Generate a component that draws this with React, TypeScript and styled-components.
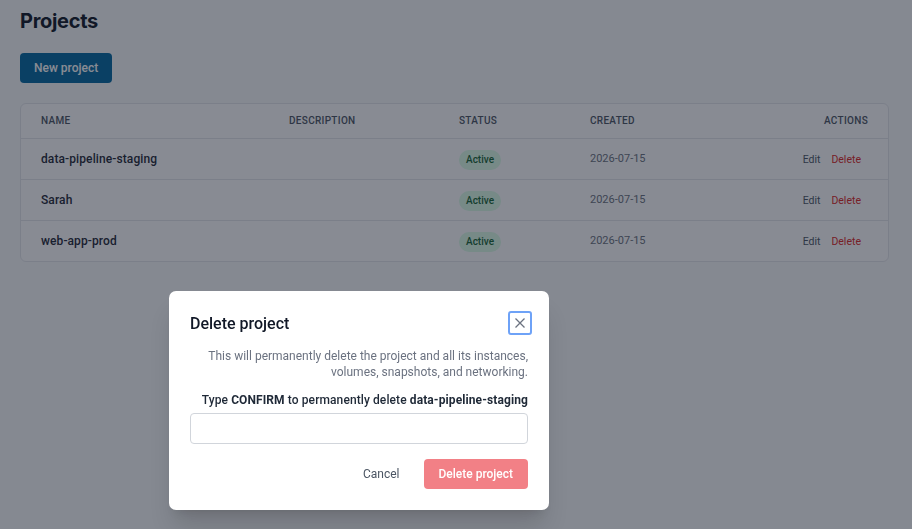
import React from 'react';
import styled, { createGlobalStyle } from 'styled-components';

const font = 'Roboto, "Noto Sans", sans-serif';

const GlobalStyle = createGlobalStyle`
  html, body {
    margin: 0;
    padding: 0;
    background: #f9fafb;
    font-family: ${font};
    color: #111827;
  }
  * { box-sizing: border-box; }
`;

const Page = styled.div`
  padding: 8px 23px 20px 20px;
  min-height: 529px;
`;

const Title = styled.h1`
  margin: 0 0 19px;
  font-family: Inter, sans-serif;
  font-size: 20px;
  line-height: 26px;
  font-weight: 700;
  letter-spacing: -0.3px;
  color: #111827;
`;

const PrimaryButton = styled.button`
  height: 30px;
  padding: 0 14px;
  border: none;
  border-radius: 4px;
  background: #0369a1;
  color: #fff;
  font: 500 12px ${font};
  margin-bottom: 20px;
`;

const Card = styled.div`
  background: #fff;
  border: 1px solid #e5e7eb;
  border-radius: 6px;
  overflow: hidden;
`;

const Row = styled.div<{ $head?: boolean }>`
  display: grid;
  grid-template-columns: 248px 170px 131px 1fr auto;
  align-items: center;
  padding: 0 20px;
  height: ${(p) => (p.$head ? '34px' : '41px')};
  border-top: ${(p) => (p.$head ? 'none' : '1px solid #e5e7eb')};
`;

const HeadCell = styled.div<{ $right?: boolean }>`
  font-size: 10px;
  font-weight: 500;
  letter-spacing: 0.3px;
  text-transform: uppercase;
  color: #4b5563;
  margin-top: -1px;
  text-align: ${(p) => (p.$right ? 'right' : 'left')};
`;

const NameCell = styled.div`
  font-size: 12px;
  font-weight: 500;
  letter-spacing: 0.1px;
  color: #1f2937;
`;

const Badge = styled.span`
  display: inline-block;
  padding: 3px 7px;
  border-radius: 999px;
  background: #dcfce7;
  color: #166534;
  font-size: 10px;
  font-weight: 500;
  line-height: 14px;
`;

const DateCell = styled.div`
  font-size: 11px;
  color: #6b7280;
  margin-top: -1px;
`;

const Actions = styled.div`
  display: flex;
  justify-content: flex-end;
  gap: 11px;
  padding-right: 7px;
`;

const LinkButton = styled.button<{ $danger?: boolean }>`
  border: none;
  background: none;
  padding: 0;
  font: 400 10.5px ${font};
  color: ${(p) => (p.$danger ? '#dc2626' : '#4b5563')};
`;

const Overlay = styled.div`
  position: fixed;
  inset: 0;
  background: rgba(17, 24, 39, 0.5);
`;

const Modal = styled.div`
  position: fixed;
  left: 169px;
  top: 291px;
  width: 380px;
  background: #fff;
  border-radius: 7px;
  box-shadow: 0 20px 25px -5px rgba(0, 0, 0, 0.15), 0 8px 10px -6px rgba(0, 0, 0, 0.1);
  padding: 20px 21px 21px;
  display: flex;
  flex-direction: column;
`;

const ModalHeader = styled.div`
  display: flex;
  justify-content: space-between;
  align-items: center;
  margin-bottom: 13px;
`;

const ModalTitle = styled.h2`
  margin: 0;
  font-size: 16px;
  font-weight: 500;
  color: #111827;
`;

const CloseButton = styled.button`
  width: 24px;
  height: 24px;
  padding: 0;
  border: 2px solid #6ea2f7;
  border-radius: 3px;
  background: #fff;
  display: flex;
  align-items: center;
  justify-content: center;
  color: #6b7280;
  margin-right: -4px;
`;

const Description = styled.p`
  margin: 0 0 13px;
  font-size: 12px;
  line-height: 16px;
  color: #6b7280;
  text-align: right;
  white-space: nowrap;
`;

const Label = styled.label`
  display: block;
  text-align: right;
  white-space: nowrap;
  font-size: 12px;
  font-weight: 500;
  letter-spacing: 0.1px;
  color: #1f2937;
  margin-bottom: 6px;
  b { font-weight: 700; }
`;

const Input = styled.input`
  height: 31px;
  width: 100%;
  border: 1px solid #d1d5db;
  border-radius: 4px;
  font: 12px ${font};
  padding: 0 10px;
  margin-bottom: 15px;
`;

const Footer = styled.div`
  display: flex;
  justify-content: flex-end;
  align-items: center;
  gap: 24px;
`;

const CancelButton = styled.button`
  border: none;
  background: none;
  padding: 0;
  font: 400 12px ${font};
  color: #4b5563;
`;

const DangerButton = styled.button`
  height: 30px;
  padding: 0 15px;
  border: none;
  border-radius: 4px;
  background: #f28086;
  color: #fff;
  font: 500 12px ${font};
`;

const projects = [
  { name: 'data-pipeline-staging', created: '2026-07-15' },
  { name: 'Sarah', created: '2026-07-15' },
  { name: 'web-app-prod', created: '2026-07-15' },
];

export default function App() {
  return (
    <>
      <GlobalStyle />
      <Page>
        <Title>Projects</Title>
        <PrimaryButton>New project</PrimaryButton>
        <Card>
          <Row $head>
            <HeadCell>Name</HeadCell>
            <HeadCell>Description</HeadCell>
            <HeadCell>Status</HeadCell>
            <HeadCell>Created</HeadCell>
            <HeadCell $right>Actions</HeadCell>
          </Row>
          {projects.map((p) => (
            <Row key={p.name}>
              <NameCell>{p.name}</NameCell>
              <div />
              <div>
                <Badge>Active</Badge>
              </div>
              <DateCell>{p.created}</DateCell>
              <Actions>
                <LinkButton>Edit</LinkButton>
                <LinkButton $danger>Delete</LinkButton>
              </Actions>
            </Row>
          ))}
        </Card>
      </Page>
      <Overlay />
      <Modal>
        <ModalHeader>
          <ModalTitle>Delete project</ModalTitle>
          <CloseButton aria-label="Close">
            <svg width="12" height="12" viewBox="0 0 12 12" fill="none" stroke="currentColor" strokeWidth="1.3">
              <path d="M1.5 1.5l9 9M10.5 1.5l-9 9" />
            </svg>
          </CloseButton>
        </ModalHeader>
        <Description>
          This will permanently delete the project and all its instances,
          <br />
          volumes, snapshots, and networking.
        </Description>
        <Label>
          Type <b>CONFIRM</b> to permanently delete <b>data-pipeline-staging</b>
        </Label>
        <Input />
        <Footer>
          <CancelButton>Cancel</CancelButton>
          <DangerButton>Delete project</DangerButton>
        </Footer>
      </Modal>
    </>
  );
}
